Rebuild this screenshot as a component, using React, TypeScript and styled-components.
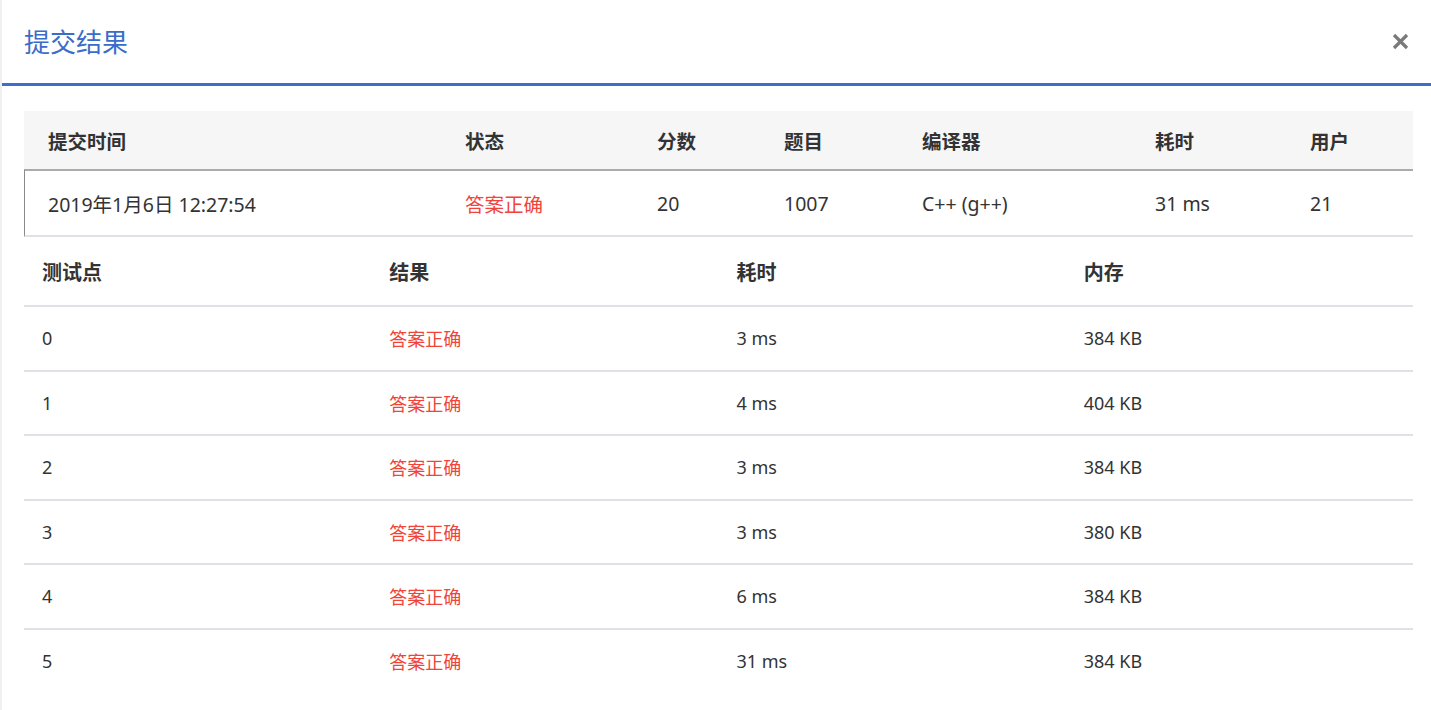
import React from 'react';
import styled, { createGlobalStyle } from 'styled-components';

const GlobalStyle = createGlobalStyle`
  html, body {
    margin: 0;
    padding: 0;
    background: #ffffff;
  }
  body {
    font-family: "Noto Sans", "Noto Sans CJK SC", sans-serif;
    color: #333333;
  }
`;

interface ISubmission {
  time: string;
  status: string;
  score: number;
  problem: string;
  compiler: string;
  cost: string;
  user: string;
}

interface ICase {
  id: number;
  result: string;
  cost: string;
  memory: string;
}

const submission: ISubmission = {
  time: '2019年1月6日 12:27:54',
  status: '答案正确',
  score: 20,
  problem: '1007',
  compiler: 'C++ (g++)',
  cost: '31 ms',
  user: '21',
};

const cases: ICase[] = [
  { id: 0, result: '答案正确', cost: '3 ms', memory: '384 KB' },
  { id: 1, result: '答案正确', cost: '4 ms', memory: '404 KB' },
  { id: 2, result: '答案正确', cost: '3 ms', memory: '384 KB' },
  { id: 3, result: '答案正确', cost: '3 ms', memory: '380 KB' },
  { id: 4, result: '答案正确', cost: '6 ms', memory: '384 KB' },
  { id: 5, result: '答案正确', cost: '31 ms', memory: '384 KB' },
];

const summaryColumns = ['提交时间', '状态', '分数', '题目', '编译器', '耗时', '用户'];
const summaryWidths = [417, 192, 127, 138, 233, 155, 127];
const caseColumns = ['测试点', '结果', '耗时', '内存'];

const Modal = styled.div`
  width: 1431px;
  height: 710px;
  box-sizing: border-box;
  border-left: 2px solid #f0f0f0;
  background: #ffffff;
  overflow: hidden;
`;

const Header = styled.div`
  height: 83px;
  display: flex;
  align-items: center;
  justify-content: space-between;
  padding: 0 21px 0 22px;
  border-bottom: 3px solid #3a6fcc;
`;

const Title = styled.h3`
  margin: 0;
  font-size: 26px;
  font-weight: 400;
  color: #3b6cc9;
  line-height: 1;
`;

const CloseButton = styled.button`
  border: none;
  background: transparent;
  padding: 0;
  width: 20px;
  height: 20px;
  display: flex;
  align-items: center;
  justify-content: center;
  cursor: pointer;
`;

const Body = styled.div`
  padding: 25px 18px 0 22px;
`;

const Table = styled.table`
  width: 1389px;
  table-layout: fixed;
  border-spacing: 0;
  border-collapse: separate;
  font-size: 18px;
`;

const HeadCell = styled.th<{ $pad: number; $height: number; $size: number }>`
  text-align: left;
  font-weight: 700;
  font-size: ${(p) => p.$size}px;
  color: #333333;
  padding: 0 0 0 ${(p) => p.$pad}px;
  height: ${(p) => p.$height}px;
`;

const SummaryHeadRow = styled.tr`
  background: #f6f6f6;
`;

const SummaryCell = styled.td<{ $red?: boolean }>`
  padding: 0 0 0 24px;
  height: 64px;
  font-size: 19.5px;
  border-top: 2px solid #ababab;
  border-bottom: 2px solid #dee2e6;
  color: ${(p) => (p.$red ? '#f0443b' : '#333333')};
  white-space: nowrap;
  &:first-child {
    border-left: 1px solid #8a8a8a;
    padding-left: 23px;
  }
`;

const CaseHeadRow = styled.tr`
  th {
    border-bottom: 2px solid #dee2e6;
  }
`;

const CaseRow = styled.tr`
  &:not(:last-child) td {
    border-bottom: 2px solid #dee2e6;
  }
`;

const CaseCell = styled.td<{ $red?: boolean }>`
  padding: 0 0 0 18px;
  height: 62.5px;
  font-size: 18px;
  color: ${(p) => (p.$red ? '#f0443b' : '#333333')};
`;

const CloseIcon = () => (
  <svg width="17" height="17" viewBox="0 0 17 17">
    <path d="M2 2 L15 15 M15 2 L2 15" stroke="#7a7a7a" strokeWidth="3.2" strokeLinecap="butt" />
  </svg>
);

export default function App() {
  return (
    <>
      <GlobalStyle />
      <Modal>
        <Header>
          <Title>提交结果</Title>
          <CloseButton aria-label="close">
            <CloseIcon />
          </CloseButton>
        </Header>
        <Body>
          <Table>
            <colgroup>
              {summaryWidths.map((w, i) => (
                <col key={i} style={{ width: w }} />
              ))}
            </colgroup>
            <thead>
              <SummaryHeadRow>
                {summaryColumns.map((c) => (
                  <HeadCell key={c} $pad={24} $height={58} $size={19.5}>{c}</HeadCell>
                ))}
              </SummaryHeadRow>
            </thead>
            <tbody>
              <tr>
                <SummaryCell>{submission.time}</SummaryCell>
                <SummaryCell $red>{submission.status}</SummaryCell>
                <SummaryCell>{submission.score}</SummaryCell>
                <SummaryCell>{submission.problem}</SummaryCell>
                <SummaryCell>{submission.compiler}</SummaryCell>
                <SummaryCell>{submission.cost}</SummaryCell>
                <SummaryCell>{submission.user}</SummaryCell>
              </tr>
            </tbody>
          </Table>
          <Table>
            <thead>
              <CaseHeadRow>
                {caseColumns.map((c) => (
                  <HeadCell key={c} $pad={18} $height={68} $size={20}>{c}</HeadCell>
                ))}
              </CaseHeadRow>
            </thead>
            <tbody>
              {cases.map((row) => (
                <CaseRow key={row.id}>
                  <CaseCell>{row.id}</CaseCell>
                  <CaseCell $red>{row.result}</CaseCell>
                  <CaseCell>{row.cost}</CaseCell>
                  <CaseCell>{row.memory}</CaseCell>
                </CaseRow>
              ))}
            </tbody>
          </Table>
        </Body>
      </Modal>
    </>
  );
}
